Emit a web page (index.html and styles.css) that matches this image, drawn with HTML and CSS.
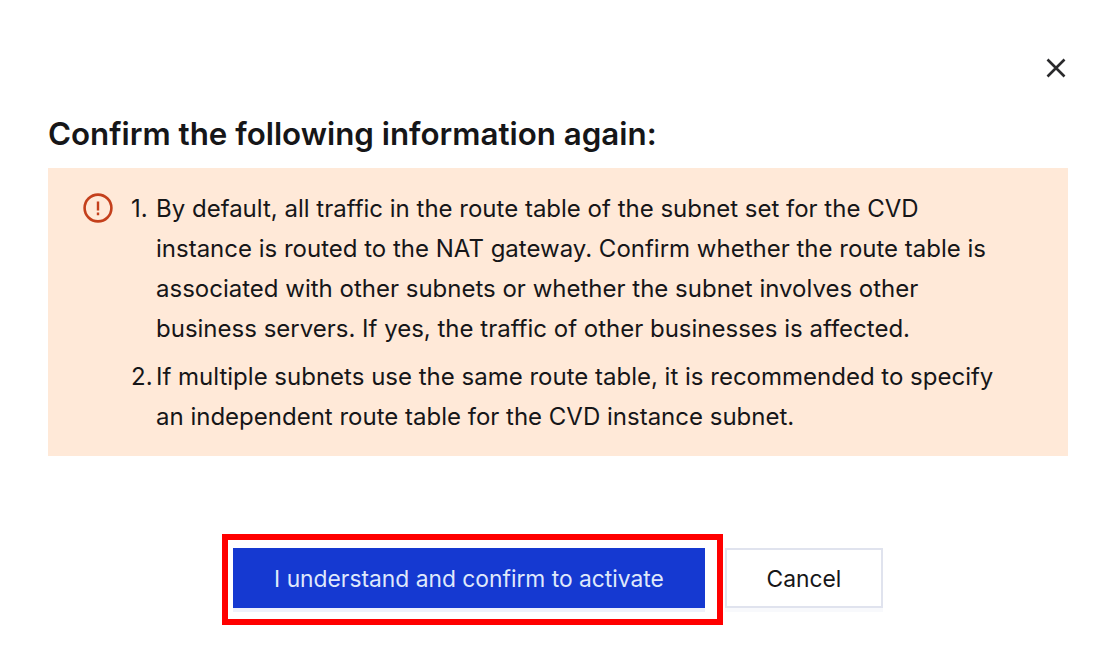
FILE: index.html
```html
<!DOCTYPE html>
<html lang="en">
<head>
  <meta charset="UTF-8">
  <meta name="viewport" content="width=device-width, initial-scale=1.0">
  <title>Confirm</title>
  <link rel="stylesheet" href="styles.css">
</head>
<body>
  <div class="dialog">
    <div class="dialog-top">
      <button class="close" aria-label="Close">
        <svg width="20" height="20" viewBox="0 0 20 20">
          <path d="M1.5 1.5L18.5 18.5M18.5 1.5L1.5 18.5" stroke="#2a2a2c" stroke-width="2.6" fill="none"/>
        </svg>
      </button>
    </div>
    <h2 class="title">Confirm the following information again:</h2>
    <div class="notice">
      <svg class="notice-icon" width="30" height="30" viewBox="0 0 30 30">
        <circle cx="15" cy="15" r="13.4" stroke="#c4401c" stroke-width="2.6" fill="none"/>
        <path d="M15 8.5V17.5M15 19.6V22.2" stroke="#c4401c" stroke-width="2.4" fill="none"/>
      </svg>
      <ol class="notice-list">
        <li>By default, all traffic in the route table of the subnet set for the CVD instance is routed to the NAT gateway. Confirm whether the route table is associated with other subnets or whether the subnet involves other business servers. If yes, the traffic of other businesses is affected.</li>
        <li>If multiple subnets use the same route table, it is recommended to specify an independent route table for the CVD instance subnet.</li>
      </ol>
    </div>
    <div class="actions">
      <div class="highlight">
        <button class="btn btn-primary">I understand and confirm to activate</button>
      </div>
      <button class="btn btn-cancel">Cancel</button>
    </div>
  </div>
</body>
</html>
```

FILE: styles.css
```css
body {
  margin: 0;
  background-color: #fff;
  font-family: Inter, "Liberation Sans", sans-serif;
  color: #161618;
}
.dialog {
  width: 1020px;
  height: 656px;
  padding: 0 50px 0 48px;
}
.dialog-top {
  display: flex;
  justify-content: flex-end;
  padding-top: 58px;
  margin-right: 2px;
  height: 56px;
}
.close {
  width: 20px;
  height: 20px;
  padding: 0;
  border: none;
  background: none;
  display: block;
}
.title {
  margin: 0;
  font-size: 31.3px;
  line-height: 40px;
  font-weight: 600;
  height: 54px;
  box-sizing: border-box;
}
.notice {
  display: flex;
  background-color: #ffe9d8;
  padding: 21px 0 0 35px;
  height: 288px;
  box-sizing: border-box;
}
.notice-icon {
  flex: none;
  margin-top: 4px;
}
.notice-list {
  margin: 0;
  padding: 0 0 0 18px;
  width: 875px;
  font-size: 24px;
  line-height: 40px;
  list-style: none;
  counter-reset: item;
}
.notice-list li {
  display: flex;
  counter-increment: item;
}
.notice-list li::before {
  content: counter(item) ".";
  flex: none;
  width: 25px;
}
.notice-list li + li {
  margin-top: 8px;
}
.actions {
  display: flex;
  justify-content: center;
  align-items: flex-start;
  gap: 20px;
  margin-top: 92px;
}
.highlight {
  position: relative;
}
.highlight::after {
  content: "";
  position: absolute;
  left: -11px;
  right: -18px;
  top: -14px;
  bottom: -17px;
  border: 6px solid #ff0000;
  pointer-events: none;
}
.btn {
  display: block;
  height: 60px;
  padding: 0;
  font-family: inherit;
  font-size: 22.8px;
  box-sizing: border-box;
  border-radius: 0;
}
.btn-primary {
  width: 472px;
  border: none;
  background-color: #1539d1;
  color: #dfe8fb;
  box-shadow: 0 4px 0 #eef1fb;
}
.btn-cancel {
  width: 158px;
  border: 2px solid #e0e3ee;
  background-color: #fff;
  color: #161618;
  box-shadow: 0 4px 0 #f8f9fc;
}
```
